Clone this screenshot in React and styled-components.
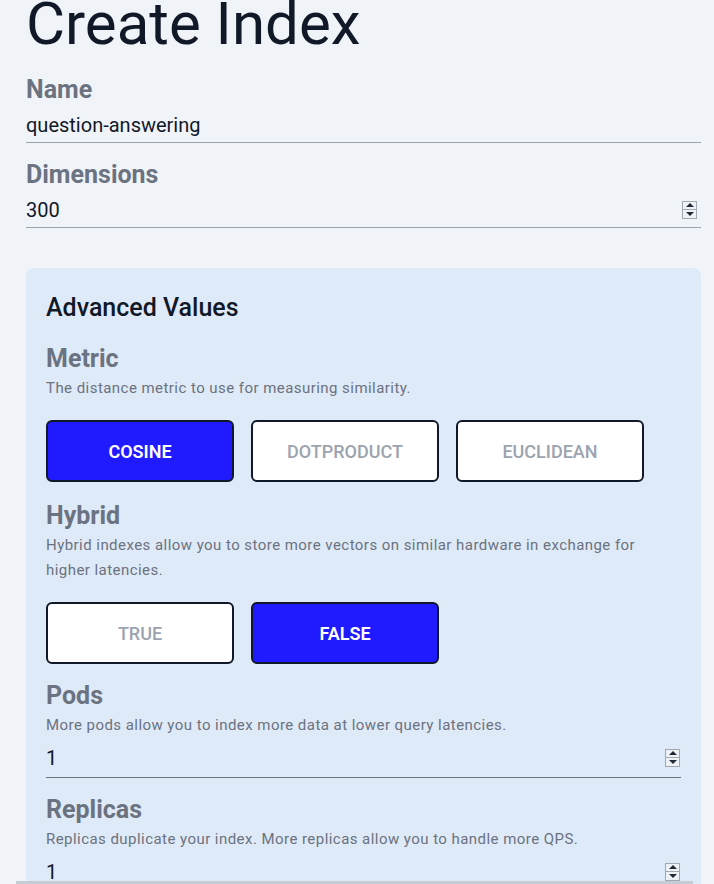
import styled, { createGlobalStyle } from "styled-components";

const GlobalStyle = createGlobalStyle`
    html, body {
        margin: 0;
        padding: 0;
        background: #f0f4f9;
        font-family: Roboto, "Liberation Sans", sans-serif;
        overflow: hidden;
    }
`;

const Page = styled.div`
    padding: 0 13px 0 26px;
    height: 884px;
    overflow: hidden;
`;

const Title = styled.h1`
    margin: -11px 0 0;
    font-size: 60px;
    font-weight: 400;
    line-height: 70px;
    color: #111827;
`;

const Label = styled.div`
    margin-top: ${({ first }) => (first ? "14px" : "15px")};
    font-size: 25px;
    font-weight: 700;
    line-height: 34px;
    color: #6b7280;
`;

const Description = styled.p`
    margin: 0;
    font-size: 15px;
    letter-spacing: 0.45px;
    line-height: 25px;
    color: #6b7280;
`;

const InputRow = styled.div`
    display: flex;
    align-items: center;
    height: ${({ tall }) => (tall ? "39px" : "35px")};
    border-bottom: 1px solid ${({ dark }) => (dark ? "#6b7280" : "#9ca3af")};
`;

const TextInput = styled.input`
    flex: 1;
    min-width: 0;
    border: none;
    outline: none;
    background: transparent;
    padding: 0;
    font-family: inherit;
    font-size: 20px;
    color: #111827;
`;

const Spinner = styled.div`
    display: flex;
    flex-direction: column;
    width: 15px;
    height: 18px;
    margin-right: ${({ inset }) => inset}px;
`;

const SpinHalf = styled.div`
    flex: 1;
    display: flex;
    align-items: center;
    justify-content: center;
    border: 1px solid #a3a8b0;
    background: #eef1f5;
    & + & {
        border-top: none;
    }
`;

const Arrow = styled.div`
    width: 0;
    height: 0;
    border-left: 4px solid transparent;
    border-right: 4px solid transparent;
    ${({ down }) =>
        down
            ? "border-top: 4px solid #1f2937;"
            : "border-bottom: 4px solid #1f2937;"}
`;

const Panel = styled.section`
    margin-top: 40px;
    background: #dfeaf8;
    border-radius: 8px;
    padding: 24px 20px 40px;
`;

const PanelTitle = styled.h2`
    margin: 0 0 6px;
    font-size: 25px;
    font-weight: 500;
    line-height: 32px;
    color: #111827;
`;

const PanelLabel = styled(Label)`
    margin-top: ${({ gap }) => gap || 15}px;
`;

const ButtonRow = styled.div`
    display: flex;
    gap: 17px;
    margin-top: 19px;
`;

const Choice = styled.button`
    width: 188px;
    height: 62px;
    border: 2px solid #111827;
    border-radius: 6px;
    background: ${({ active }) => (active ? "#1f1aff" : "#ffffff")};
    color: ${({ active }) => (active ? "#ffffff" : "#9ca3af")};
    font-family: inherit;
    font-size: 18px;
    font-weight: ${({ active }) => (active ? 600 : 500)};
    text-transform: uppercase;
    cursor: pointer;
`;

const ScrollBar = styled.div`
    position: fixed;
    left: 16px;
    bottom: 0;
    width: 677px;
    height: 3px;
    background: #c6ccd4;
`;

const NumberSpinner = ({ inset }) => (
    <Spinner inset={inset}>
        <SpinHalf>
            <Arrow />
        </SpinHalf>
        <SpinHalf>
            <Arrow down />
        </SpinHalf>
    </Spinner>
);

const Field = ({ value, number, panel }) => (
    <InputRow tall={panel} dark={panel}>
        <TextInput defaultValue={value} />
        {number && <NumberSpinner inset={panel ? 1 : 4} />}
    </InputRow>
);

const Choices = ({ options, selected }) => (
    <ButtonRow>
        {options.map((option) => (
            <Choice key={option} active={option === selected}>
                {option}
            </Choice>
        ))}
    </ButtonRow>
);

const App = () => {
    return (
        <Page>
            <GlobalStyle />
            <Title>Create Index</Title>
            <Label first>Name</Label>
            <Field value="question-answering" />
            <Label>Dimensions</Label>
            <Field value="300" number />
            <Panel>
                <PanelTitle>Advanced Values</PanelTitle>
                <PanelLabel gap={18}>Metric</PanelLabel>
                <Description>
                    The distance metric to use for measuring similarity.
                </Description>
                <Choices
                    options={["cosine", "dotproduct", "euclidean"]}
                    selected="cosine"
                />
                <PanelLabel gap={17}>Hybrid</PanelLabel>
                <Description>
                    Hybrid indexes allow you to store more vectors on similar
                    hardware in exchange for higher latencies.
                </Description>
                <Choices options={["true", "false"]} selected="false" />
                <PanelLabel>Pods</PanelLabel>
                <Description>
                    More pods allow you to index more data at lower query
                    latencies.
                </Description>
                <Field value="1" number panel />
                <PanelLabel>Replicas</PanelLabel>
                <Description>
                    Replicas duplicate your index. More replicas allow you to
                    handle more QPS.
                </Description>
                <Field value="1" number panel />
            </Panel>
            <ScrollBar />
        </Page>
    );
};

export default App;
